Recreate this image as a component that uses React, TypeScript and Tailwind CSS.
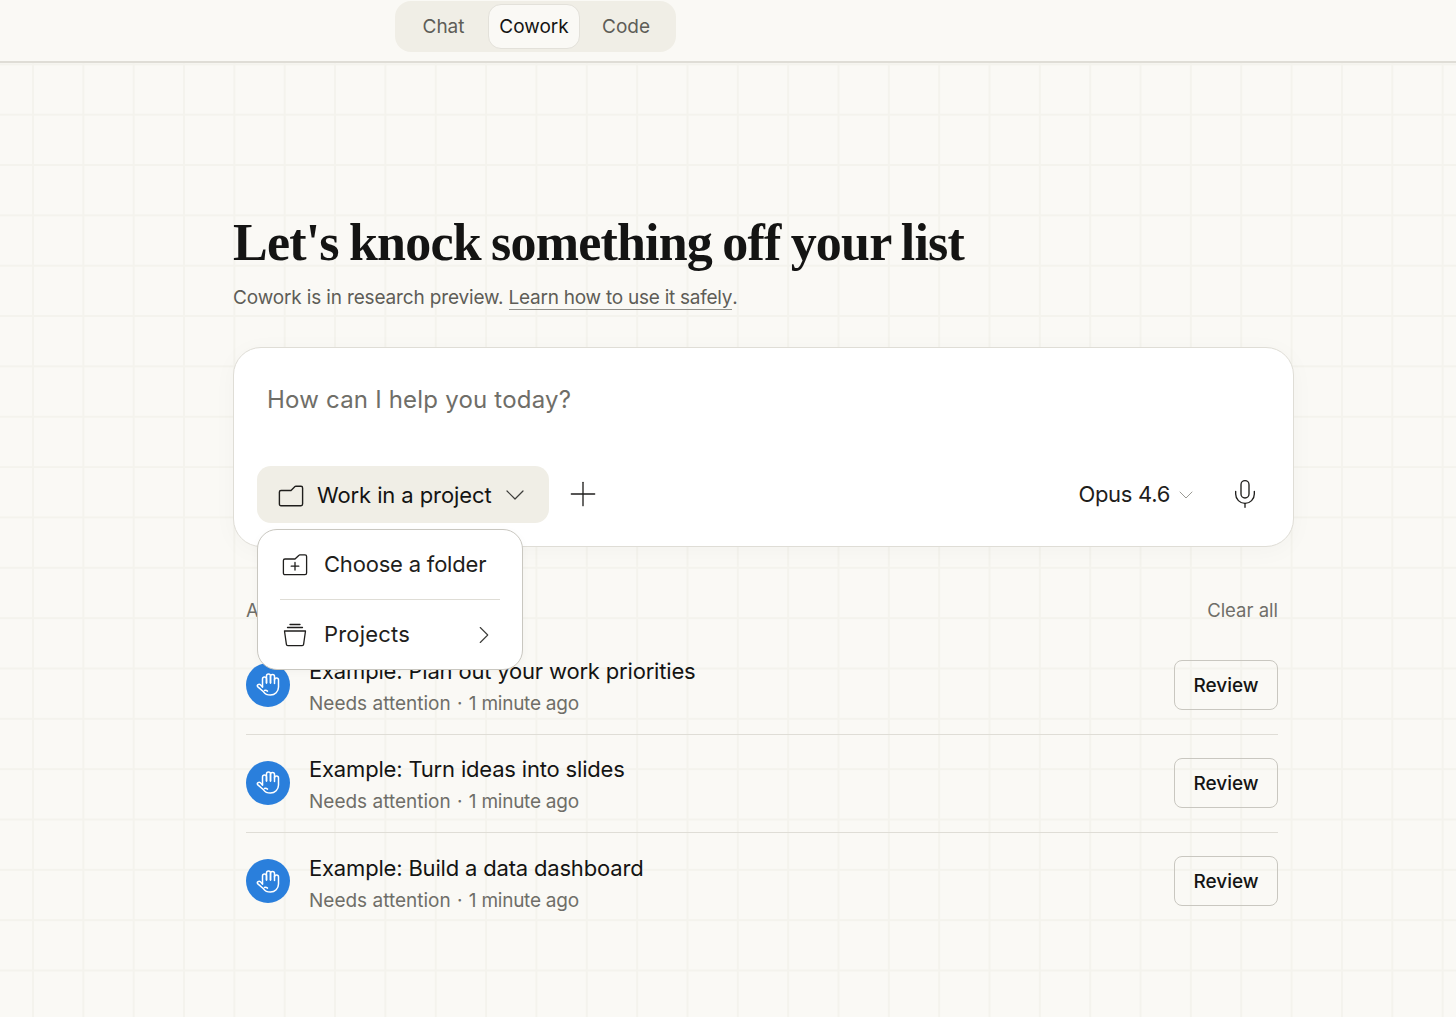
import { ChevronDown, ChevronRight, Mic, Plus } from "lucide-react";

const tasks = [
  "Example: Plan out your work priorities",
  "Example: Turn ideas into slides",
  "Example: Build a data dashboard",
];

const FolderIcon = () => (
  <svg width="26" height="24" viewBox="0 0 26 24" fill="none" stroke="#1f1e1c" strokeWidth="1.4" strokeLinejoin="round">
    <path d="M3 7.5H13L17 3.6C17.2 3.4 17.5 3.3 17.8 3.3H23C24 3.3 24.6 4 24.6 5V21C24.6 22 24 22.7 23 22.7H3C2 22.7 1.4 22 1.4 21V9C1.4 8 2 7.5 3 7.5Z" />
  </svg>
);

const FolderPlusIcon = () => (
  <svg width="26" height="24" viewBox="0 0 26 24" fill="none" stroke="#1f1e1c" strokeWidth="1.3" strokeLinejoin="round">
    <path d="M3 7H13L17 3.2C17.2 3 17.5 2.9 17.8 2.9H23C24 2.9 24.6 3.5 24.6 4.5V21C24.6 22 24 22.6 23 22.6H3C2 22.6 1.4 22 1.4 21V8.6C1.4 7.6 2 7 3 7Z" />
    <path d="M13 10.5V18M9.2 14.2H16.8" strokeLinecap="round" />
  </svg>
);

const ProjectsIcon = () => (
  <svg width="24" height="24" viewBox="0 0 24 24" fill="none" stroke="#1f1e1c" strokeWidth="1.3" strokeLinecap="round" strokeLinejoin="round">
    <path d="M7 1.5H17M4.5 4.5H19.5" />
    <path d="M1.5 8H22.5L20.6 21.4C20.5 22.2 20 22.6 19.2 22.6H4.8C4 22.6 3.5 22.2 3.4 21.4L1.5 8Z" />
  </svg>
);

const HandIcon = () => (
  <svg width="24" height="25" viewBox="0 0 24 25" fill="none" stroke="#fff" strokeWidth="1.5" strokeLinecap="round" strokeLinejoin="round">
    <path d="M6.5 15V7a2 2 0 0 1 4 0V11" />
    <path d="M10.5 11V4a2 2 0 0 1 4 0V11" />
    <path d="M14.5 11V4.5a2 2 0 0 1 4 0V11.5" />
    <path d="M18.5 8a2 2 0 0 1 4 0V15a8 8 0 0 1-8 8c-3.5 0-5.5-1-7-3.2L1.6 14.6c-1-1.5 1.4-3.2 2.8-1.8L6.5 15" />
    <path d="M8.5 18.5c1-.6 2-.3 3 .6" />
  </svg>
);

const TaskRow = ({ title, last }: { title: string; last?: boolean }) => (
  <div className={`flex h-[98px] items-center pb-[2px] ${last ? "" : "border-b border-[#dfddd6]"}`}>
    <div className="flex size-11 shrink-0 items-center justify-center rounded-full bg-[#2a7fdc]">
      <HandIcon />
    </div>
    <div className="mt-[7px] ml-[19px] flex flex-col">
      <p className="text-[22px] leading-[32px] tracking-[-0.18px] text-[#141413]">{title}</p>
      <p className="text-[19px] leading-[34px] text-[#6f6e68]">
        Needs attention <span className="mx-[1px]">·</span>{" "}
        <span className="tracking-[-0.25px]">1 minute ago</span>
      </p>
    </div>
    <button className="ml-auto h-[50px] w-[104px] rounded-lg border border-[#c9c7c0] pt-[3px] text-[19px] font-medium text-[#141413]">
      Review
    </button>
  </div>
);

const App = () => {
  return (
    <div className="h-[1017px] w-full overflow-hidden bg-[#faf9f5] bg-[linear-gradient(to_right,#f4f3ed_1.5px,transparent_1.5px),linear-gradient(to_bottom,#f4f3ed_1.5px,transparent_1.5px)] bg-[size:50.35px_50.35px] bg-[position:32px_13px] font-['Inter',sans-serif]">
      <header className="h-[63px] border-b-2 border-[#dfddd6] bg-[#faf9f5] pt-px pl-[395px]">
        <div className="flex h-[51px] w-[281px] items-center rounded-[16px] bg-[#f0eee6] pl-[4px] text-[19px] text-[#5e5d57]">
          <span className="w-[89px] pt-[2px] text-center">Chat</span>
          <span className="flex h-[45px] w-[92px] items-center justify-center rounded-[13px] border border-[#e3e1da] bg-[#faf9f5] pt-[2px] text-[#141413]">
            Cowork
          </span>
          <span className="w-[92px] pt-[2px] text-center">Code</span>
        </div>
      </header>

      <main className="ml-[233px] w-[1061px] pt-[150px]">
        <h1 className="font-['Liberation_Serif',serif] text-[52px] leading-[60px] font-bold tracking-[-0.8px] [word-spacing:-2px] text-[#141413]">
          Let's knock something off your list
        </h1>
        <p className="mt-[11px] text-[19px] leading-[28px] tracking-[-0.15px] text-[#5e5d57]">
          Cowork is in research preview.{" "}
          <span className="border-b border-[#8f8e88] tracking-[-0.25px]">Learn how to use it safely</span>.
        </p>

        <div className="relative mt-[35px] h-[200px] rounded-[28px] border border-[#dfddd6] bg-white px-[23px] pt-[36px] shadow-[0_4px_24px_rgba(0,0,0,0.03)]">
          <p className="pl-[10px] text-[24px] leading-[32px] tracking-[0.2px] text-[#6f6e68]">How can I help you today?</p>
          <div className="mt-[50px] flex items-center">
            <button className="flex h-[57px] w-[292px] items-center rounded-[14px] bg-[#f0eee6] pl-[21px] text-[22px] tracking-[-0.1px] text-[#141413]">
              <FolderIcon />
              <span className="ml-[13px] pt-[2px]">Work in a project</span>
              <ChevronDown size={32} strokeWidth={0.9} className="ml-[7px]" color="#3d3d3a" />
            </button>
            <Plus size={40} strokeWidth={0.8} className="mb-[2px] ml-[14px]" color="#1f1e1c" />
            <span className="ml-auto mb-[1px] text-[22px] tracking-[-0.3px] text-[#1f1e1c]">Opus 4.6</span>
            <ChevronDown size={24} strokeWidth={0.9} className="ml-1" color="#8f8e88" />
            <Mic size={32} strokeWidth={1} className="mr-[9px] mb-[2px] ml-[31px]" color="#1f1e1c" />
          </div>

          {/* dropdown sits over the list below */}
          <div className="absolute top-[181px] left-[23px] z-10 w-[266px] rounded-[20px] border border-[#c9c7c0] bg-white px-[22px] shadow-[0_2px_8px_rgba(0,0,0,0.03)]">
            <div className="flex h-[70px] items-center border-b border-[#dfddd6] pb-[2px] pl-[2px]">
              <FolderPlusIcon />
              <span className="ml-[16px] pt-[2px] text-[22px] tracking-[-0.2px] text-[#1f1e1c]">Choose a folder</span>
            </div>
            <div className="flex h-[69px] items-center pl-[3px]">
              <ProjectsIcon />
              <span className="ml-[17px] text-[22px] tracking-[0.2px] text-[#1f1e1c]">Projects</span>
              <ChevronRight size={30} strokeWidth={0.9} className="mr-[1px] ml-auto" color="#3d3d3a" />
            </div>
          </div>
        </div>

        <div className="mt-[50px] mr-[16px] ml-[13px]">
          <div className="flex h-[28px] items-center justify-between text-[18.5px] text-[#6f6e68]">
            <span>All tasks</span>
            <span>Clear all</span>
          </div>
          <div className="mt-[12px]">
            {tasks.map((t, i) => (
              <TaskRow key={t} title={t} last={i === tasks.length - 1} />
            ))}
          </div>
        </div>
      </main>
    </div>
  );
};

export default App;
